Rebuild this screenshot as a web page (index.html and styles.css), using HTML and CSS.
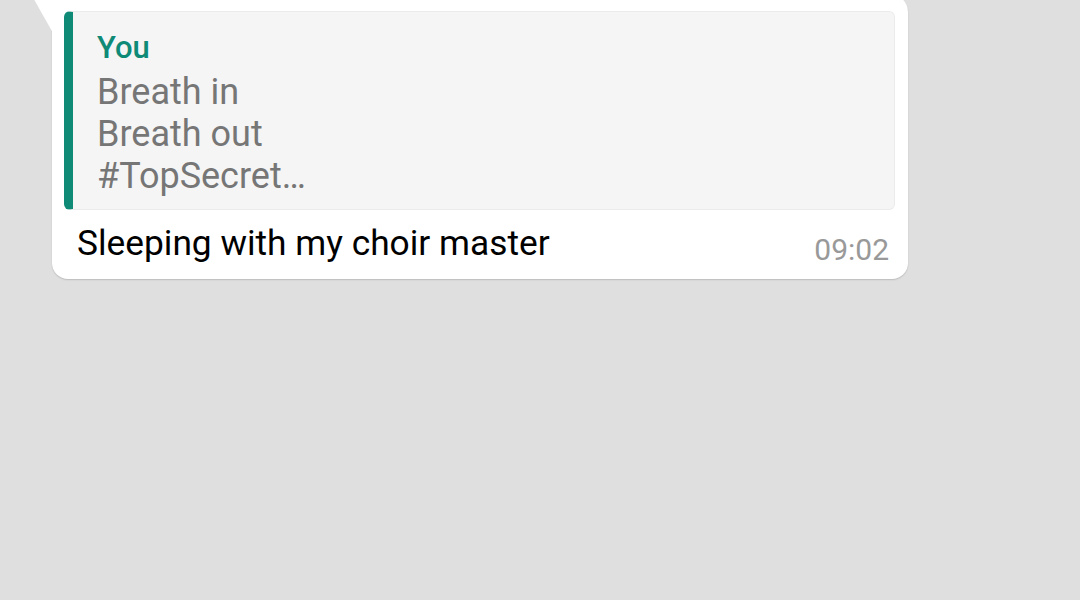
FILE: index.html
```html
<!DOCTYPE html>
<html>
<head>
<meta charset="utf-8">
<link rel="stylesheet" href="styles.css">
</head>
<body>
<div class="chat">
  <div class="bubble">
    <div class="quote">
      <div class="author">You</div>
      <div class="quoted">Breath in</div>
      <div class="quoted">Breath out</div>
      <div class="quoted">#TopSecret…</div>
    </div>
    <div class="row">
      <span class="msg">Sleeping with my choir master</span>
      <span class="time">09:02</span>
    </div>
  </div>
</div>
</body>
</html>
```
FILE: styles.css
```css
html, body {
  margin: 0;
  padding: 0;
  background: #dfdfdf;
  height: 100%;
  overflow: hidden;
  font-family: Roboto, "Liberation Sans", sans-serif;
}
.chat {
  padding-left: 52px;
}
.bubble {
  position: relative;
  width: 856px;
  box-sizing: border-box;
  margin-top: -6px;
  padding: 17px 13px 0 12px;
  background: #ffffff;
  border-radius: 0 18px 16px 16px;
  box-shadow: 0 1px 1.5px rgba(0, 0, 0, 0.16);
}
.bubble::before {
  content: "";
  position: absolute;
  left: -21px;
  top: 0;
  width: 22px;
  height: 39px;
  background: #ffffff;
  clip-path: polygon(0 0, 100% 0, 100% 100%);
}
.quote {
  height: 199px;
  box-sizing: border-box;
  padding: 12px 12px 0 24px;
  background: #f5f5f5;
  border: 1px solid #ebebeb;
  border-left: 9px solid #0e8a77;
  border-radius: 6px;
}
.author {
  color: #0e8a77;
  font-size: 31px;
  font-weight: 500;
  line-height: 47px;
}
.quoted {
  color: #767676;
  font-size: 36px;
  line-height: 42px;
}
.row {
  display: flex;
  justify-content: space-between;
  align-items: flex-end;
  padding: 13px 6px 16px 13px;
}
.msg {
  color: #000;
  font-size: 35.3px;
  line-height: 40px;
}
.time {
  color: #999999;
  font-size: 30px;
  line-height: 26px;
}
```
